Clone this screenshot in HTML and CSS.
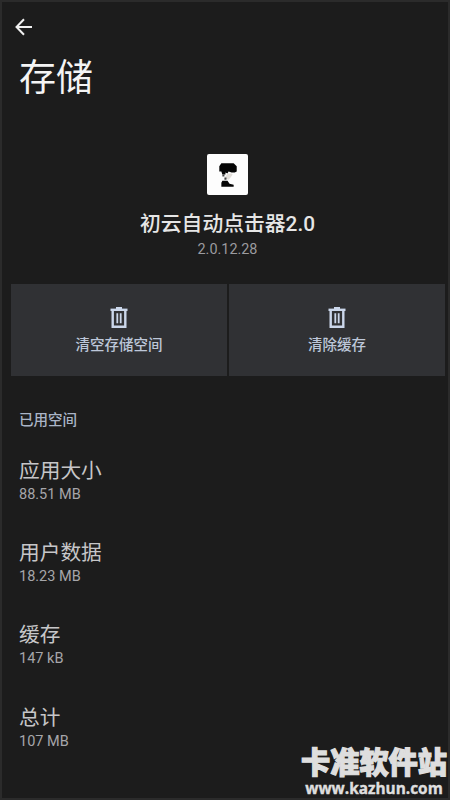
FILE: index.html
```html
<!DOCTYPE html>
<html lang="zh-CN">
<head>
<meta charset="utf-8">
<title>存储</title>
<link rel="stylesheet" href="styles.css">
</head>
<body>
<main class="screen">
  <header class="header">
    <svg class="back" viewBox="0 0 18 18"><path d="M17 9H1.5M9 1.2L1.5 9L9 16.8"/></svg>
    <h1 class="title">存储</h1>
  </header>
  <section class="app">
    <div class="app-icon">
      <svg viewBox="0 0 40 40"><path fill="#050505" d="M12 12L14 9H26L29 12V17L27 18H24L21 17L20 19L18 18V20H15L14 17H12Z"/><path fill="#e2ded9" d="M20 19L24 19L25 20L23 23L21 25L18 24V22Z"/><path fill="#444" d="M15 20H17V22H15ZM17 23H19V25H17Z"/><path fill="#050505" d="M15 26H20L22 29L26 30V32H14V28Z"/></svg>
    </div>
    <div class="app-name">初云自动点击器2.0</div>
    <div class="app-version">2.0.12.28</div>
  </section>
  <section class="actions">
    <div class="action">
      <svg class="trash" viewBox="0 0 18 22"><path class="frame" d="M2.7 3V19.8H15.3V3"/><path class="frame" d="M.5 2.8H17.5"/><path class="lid" d="M6 1H12"/><path class="bars" d="M7.3 6.3V16.3M10.7 6.3V16.3"/></svg>
      <span>清空存储空间</span>
    </div>
    <div class="action">
      <svg class="trash" viewBox="0 0 18 22"><path class="frame" d="M2.7 3V19.8H15.3V3"/><path class="frame" d="M.5 2.8H17.5"/><path class="lid" d="M6 1H12"/><path class="bars" d="M7.3 6.3V16.3M10.7 6.3V16.3"/></svg>
      <span>清除缓存</span>
    </div>
  </section>
  <section class="usage">
    <h2 class="usage-title">已用空间</h2>
    <div class="row"><div class="label">应用大小</div><div class="value">88.51 MB</div></div>
    <div class="row"><div class="label">用户数据</div><div class="value">18.23 MB</div></div>
    <div class="row"><div class="label">缓存</div><div class="value">147 kB</div></div>
    <div class="row"><div class="label">总计</div><div class="value">107 MB</div></div>
  </section>
  <div class="watermark">
    <div class="mark-name">卡准软件站</div>
    <div class="mark-url">www.kazhun.com</div>
  </div>
</main>
</body>
</html>
```
FILE: styles.css
```css
* { box-sizing: border-box; }
body { margin: 0; background: #1c1c1c; }
.screen {
  position: relative;
  width: 450px;
  height: 800px;
  overflow: hidden;
  border: 2px solid #2b2b2b;
  background: #1c1c1c;
  font-family: Roboto, "Noto Sans CJK SC", sans-serif;
}
.header { padding: 16px 0 0 13px; height: 152px; }
.back { display: block; width: 18px; height: 18px; fill: none; stroke: #f0f0f0; stroke-width: 2; }
.title { margin: 19px 0 0 4px; font-size: 37px; line-height: 48px; font-weight: 400; color: #f4f4f4; }
.app { display: flex; flex-direction: column; align-items: center; height: 130px; padding-left: 5px; }
.app-icon { width: 41px; height: 41px; border-radius: 2px; background: #fdfdfd; }
.app-icon svg { display: block; width: 41px; height: 41px; }
.app-name { margin-top: 14px; font-size: 20.8px; line-height: 30px; font-weight: 500; color: #e6e6e6; }
.app-version { margin-top: 1px; font-size: 14.4px; line-height: 20px; color: #9b9b9f; }
.actions { display: flex; gap: 2px; margin: 0 3px 0 9px; height: 92px; }
.action {
  flex: 1;
  display: flex;
  flex-direction: column;
  align-items: center;
  padding-top: 23px;
  background: #303134;
  color: #bdc7d9;
  font-size: 14.5px;
  line-height: 20px;
  font-weight: 500;
}
.trash { width: 18px; height: 22px; margin-bottom: 7px; fill: none; stroke: #cbd7eb; }
.frame { stroke-width: 2.4; }
.lid { stroke-width: 2; }
.bars { stroke-width: 1.8; }
.usage { padding: 35px 0 0 17px; }
.usage-title { margin: 0; font-size: 14.5px; line-height: 20px; font-weight: 500; color: #aab5c7; }
.row { height: 82.2px; padding-top: 25px; }
.label { font-size: 20.7px; line-height: 30px; color: #c6c6c8; }
.value { margin-top: -1px; font-size: 14.5px; line-height: 20px; color: #a6a6aa; }
.watermark {
  position: absolute;
  right: 0;
  bottom: 0;
  width: 148px;
  color: #dedede;
  text-align: center;
}
.mark-name { font-family: "Noto Sans CJK SC", sans-serif; font-size: 29.2px; line-height: 32px; font-weight: 900; -webkit-text-stroke: 1.2px #dedede; white-space: nowrap; }
.mark-url { margin-top: 4px; font-family: "Open Sans", sans-serif; font-size: 15.4px; line-height: 18px; font-weight: 700; -webkit-text-stroke: 0.4px #dedede; white-space: nowrap; }
```
